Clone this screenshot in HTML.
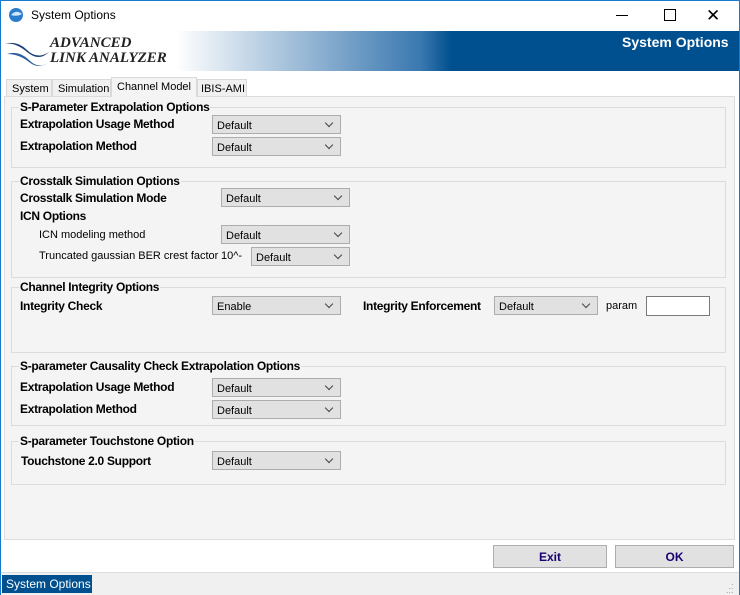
<!DOCTYPE html>
<html><head><style>
body{margin:0;width:740px;height:595px;position:relative;overflow:hidden;background:#fff;font-family:"Liberation Sans",sans-serif;font-size:11px;color:#000}
.a{position:absolute;white-space:nowrap}
.b{font-weight:bold;font-size:12px;letter-spacing:-0.3px}
.grp{position:absolute;left:11px;width:713px;border:1px solid #dcdcdc}
.gt{position:absolute;top:-8px;left:7px;background:#f4f4f4;padding:0 1px;font-weight:bold;font-size:12px;letter-spacing:-0.3px;white-space:nowrap}
.cb{position:absolute;height:19px;background:#e1e1e1;border:1px solid #adadad;box-sizing:border-box;font-size:11px;padding:4px 0 0 4px}
.cb:after{content:"";position:absolute;right:8px;top:4px;width:5px;height:5px;border-right:1px solid #444;border-bottom:1px solid #444;transform:rotate(45deg)}
.tab{position:absolute;top:79px;height:17px;border:1px solid #d9d9d9;border-bottom:none;background:#f0f0f0;font-size:11px;padding:3px 0 0 5px;box-sizing:border-box;white-space:nowrap;overflow:hidden}
.btn{position:absolute;top:545px;height:23px;background:#e1e1e1;border:1px solid #adadad;box-sizing:border-box;text-align:center;font-weight:bold;color:#1a0070;font-size:12px;padding-top:4px}
</style></head><body>
<div class="a" style="left:0;top:0;width:738px;height:593px;border:1px solid #1979ca"></div>
<svg class="a" style="left:8px;top:7px" width="17" height="17"><circle cx="8" cy="8" r="7" fill="#2a7ccc"/><path d="M3 8q5-6 11-1q-5 3-11 1z" fill="#cfe6ff"/></svg>
<div class="a" style="left:31px;top:8px;font-size:12px">System Options</div>
<div class="a" style="left:616px;top:15px;width:12px;height:1px;background:#000"></div>
<div class="a" style="left:664px;top:9px;width:10px;height:10px;border:1px solid #000"></div>
<div class="a" style="left:706px;top:6px;font-size:17px">✕</div>
<div class="a" style="left:1px;top:31px;width:738px;height:40px;background:linear-gradient(90deg,#fff 0,#fff 175px,#3a78b0 420px,#00508f 450px,#00508f 100%)"></div>
<svg class="a" style="left:5px;top:38px" width="45" height="30"><path d="M0 6q12-4 22 6t22 2q-10 10-22 0t-22-8z" fill="#1b3f7a"/><path d="M2 16q12-4 22 6t20 2q-10 8-20 0t-22-8z" fill="#2a5ea0"/></svg>
<div class="a" style="left:50px;top:36px;font-family:'Liberation Serif',serif;font-style:italic;font-weight:bold;font-size:15px;color:#222;line-height:15px">ADVANCED<br>LINK ANALYZER</div>
<div class="a" style="left:622px;top:34px;color:#fff;font-weight:bold;font-size:14px">System Options</div>
<div class="a" style="left:4px;top:96px;width:731px;height:444px;background:#f4f4f4;border:1px solid #dcdcdc;box-sizing:border-box"></div>
<div class="tab" style="left:6px;width:46px">System</div>
<div class="tab" style="left:52px;width:59px">Simulation</div>
<div class="tab" style="left:111px;top:77px;height:20px;width:86px;background:#f4f4f4">Channel Model</div>
<div class="tab" style="left:197px;width:50px;padding-left:3px">IBIS-AMI</div>
<div class="grp" style="top:107px;height:59px"><div class="gt">S-Parameter Extrapolation Options</div></div>
<div class="a b" style="left:20px;top:117px">Extrapolation Usage Method</div>
<div class="cb" style="left:212px;top:115px;width:129px">Default</div>
<div class="a b" style="left:20px;top:139px">Extrapolation Method</div>
<div class="cb" style="left:212px;top:137px;width:129px">Default</div>
<div class="grp" style="top:181px;height:95px"><div class="gt">Crosstalk Simulation Options</div></div>
<div class="a b" style="left:20px;top:191px">Crosstalk Simulation Mode</div>
<div class="cb" style="left:221px;top:188px;width:129px">Default</div>
<div class="a b" style="left:20px;top:209px">ICN Options</div>
<div class="a" style="left:39px;top:229px">ICN modeling method</div>
<div class="cb" style="left:221px;top:225px;width:129px">Default</div>
<div class="a" style="left:39px;top:250px">Truncated gaussian BER crest factor</div>
<div class="a" style="left:221px;top:250px">10^-</div>
<div class="cb" style="left:251px;top:247px;width:99px">Default</div>
<div class="grp" style="top:287px;height:64px"><div class="gt">Channel Integrity Options</div></div>
<div class="a b" style="left:20px;top:299px">Integrity Check</div>
<div class="cb" style="left:212px;top:296px;width:129px">Enable</div>
<div class="a b" style="left:363px;top:299px">Integrity Enforcement</div>
<div class="cb" style="left:494px;top:296px;width:104px">Default</div>
<div class="a" style="left:606px;top:300px">param</div>
<div class="a" style="left:646px;top:296px;width:64px;height:20px;background:#fff;border:1px solid #7a7a7a;box-sizing:border-box"></div>
<div class="grp" style="top:366px;height:58px"><div class="gt">S-parameter Causality Check Extrapolation Options</div></div>
<div class="a b" style="left:20px;top:380px">Extrapolation Usage Method</div>
<div class="cb" style="left:212px;top:378px;width:129px">Default</div>
<div class="a b" style="left:20px;top:402px">Extrapolation Method</div>
<div class="cb" style="left:212px;top:400px;width:129px">Default</div>
<div class="grp" style="top:441px;height:42px"><div class="gt">S-parameter Touchstone Option</div></div>
<div class="a b" style="left:21px;top:454px">Touchstone 2.0 Support</div>
<div class="cb" style="left:212px;top:451px;width:129px">Default</div>
<div class="btn" style="left:493px;width:114px">Exit</div>
<div class="btn" style="left:615px;width:119px">OK</div>
<div class="a" style="left:1px;top:572px;width:738px;height:22px;background:#f0f0f0;border-top:1px solid #dcdcdc"></div>
<div class="a" style="left:2px;top:575px;width:90px;height:18px;background:#00508f;color:#fff;font-size:12px;padding:2px 0 0 4px;box-sizing:border-box">System Options</div>
<div class="a" style="left:726px;top:580px;color:#999;font-size:9px;line-height:4px">&nbsp;&nbsp;.<br>&nbsp;..<br>...</div>
</body></html>
